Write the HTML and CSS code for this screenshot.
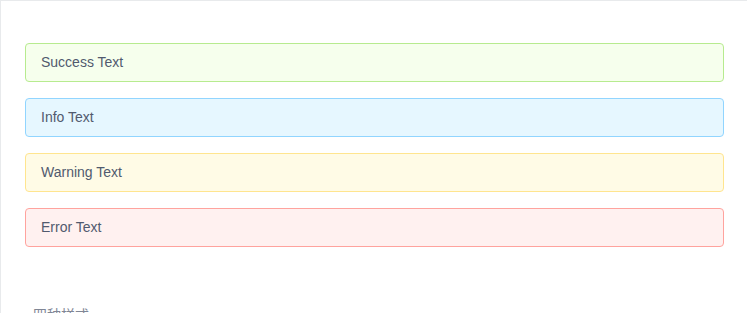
FILE: index.html
```html
<!DOCTYPE html>
<html lang="zh">
<head>
<meta charset="utf-8">
<title>Alert</title>
<link rel="stylesheet" href="styles.css">
</head>
<body>
<div class="card">
  <div class="alerts">
    <div class="alert alert-success">Success Text</div>
    <div class="alert alert-info">Info Text</div>
    <div class="alert alert-warning">Warning Text</div>
    <div class="alert alert-error">Error Text</div>
  </div>
  <div class="section-title">四种样式</div>
</div>
</body>
</html>
```
FILE: styles.css
```css
html, body {
  margin: 0;
  padding: 0;
  overflow: hidden;
  background: #fff;
}
body {
  font-family: "Liberation Sans", Arial, "Noto Sans CJK SC", sans-serif;
  color: #515a6e;
}
.card {
  box-sizing: border-box;
  width: 749px;
  min-height: 400px;
  border: 1px solid #e8eaec;
  padding: 42px 24px 24px 24px;
}
.alerts {
  display: flex;
  flex-direction: column;
  gap: 16px;
}
.alert {
  border: 1px solid;
  border-radius: 4px;
  padding: 8px 15px;
  font-size: 14px;
  line-height: 21px;
  color: #515a6e;
}
.alert-success { background: #f6ffed; border-color: #b7eb8f; }
.alert-info { background: #e6f7ff; border-color: #91d5ff; }
.alert-warning { background: #fffbe6; border-color: #ffe58f; }
.alert-error { background: #fff1f0; border-color: #ffa39e; }
.section-title {
  margin-top: 57px;
  padding-left: 8px;
  font-size: 14px;
  line-height: 20px;
  color: #808695;
  font-family: "Noto Sans CJK SC", sans-serif;
}
```
